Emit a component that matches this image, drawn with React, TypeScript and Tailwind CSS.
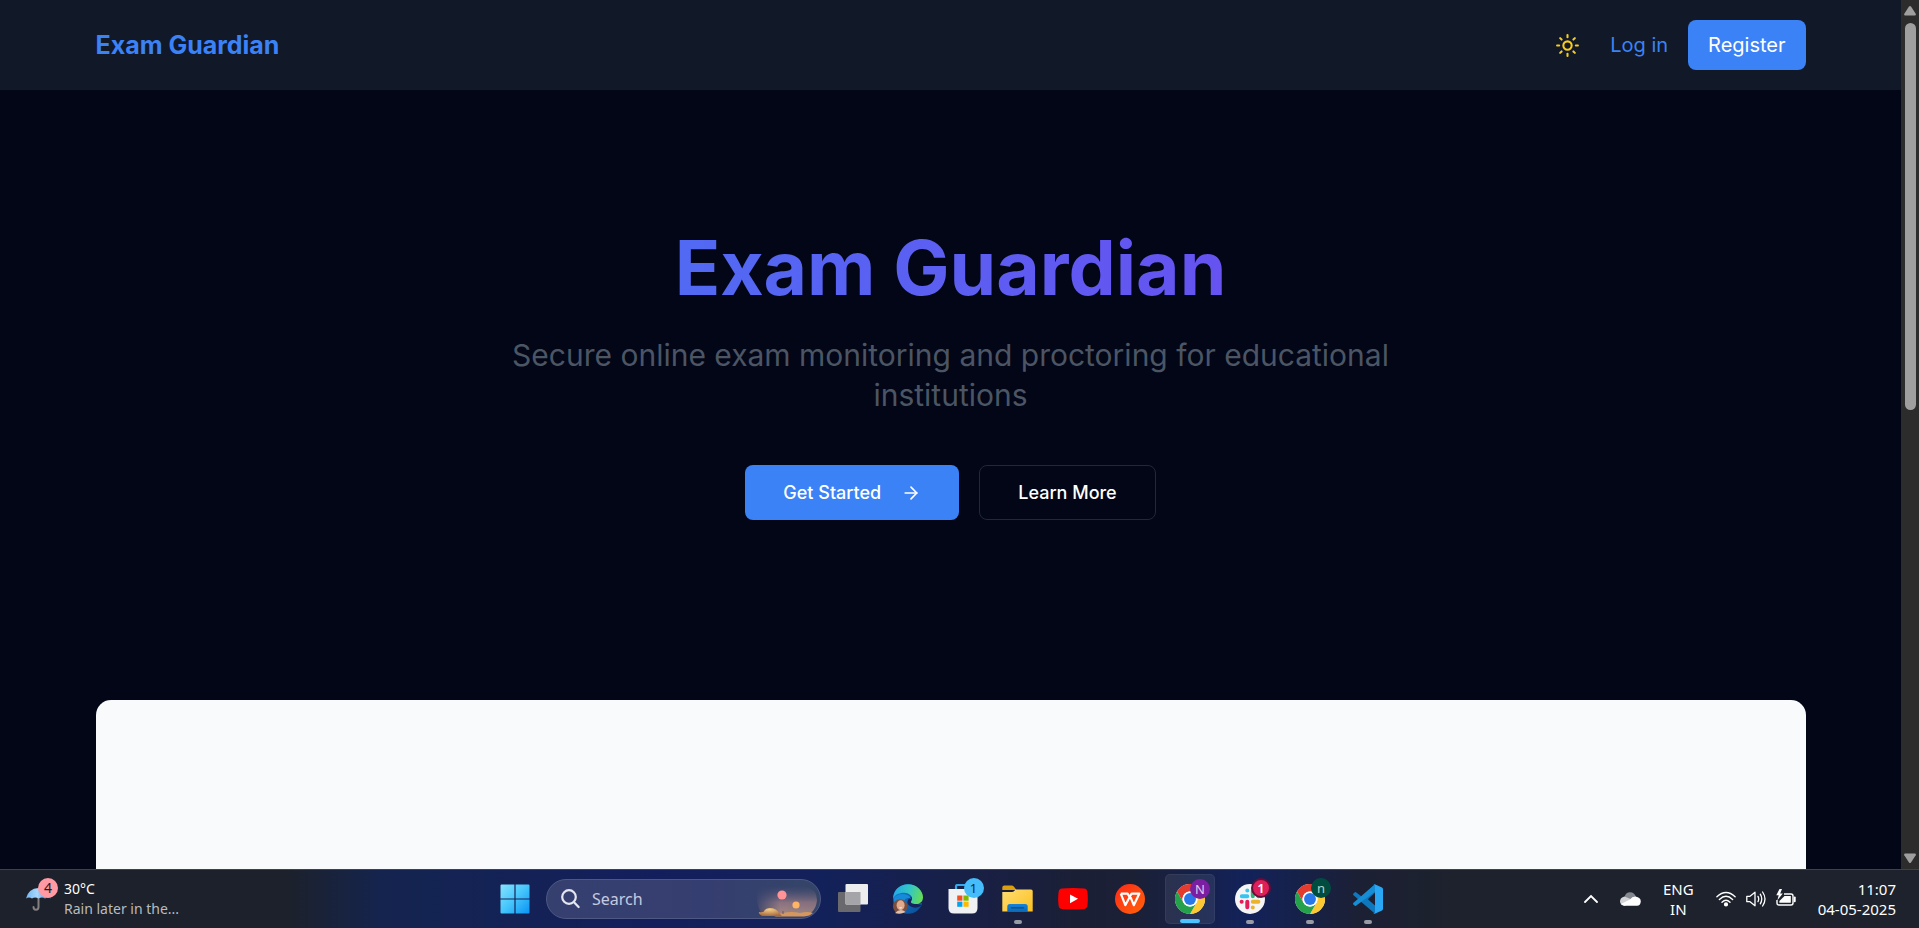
import type { ReactNode } from "react";
import { ArrowRight, Sun } from "lucide-react";

function Header() {
  return (
    <header className="bg-[#111827]">
      <div className="mx-auto flex h-[90px] w-[90%] max-w-[1710px] items-center justify-between">
        <a href="#home" className="text-[25px] leading-[35px] font-bold text-[#3b82f6]">
          Exam Guardian
        </a>
        <nav className="flex items-center gap-5 text-[20px] leading-[30px]">
          <button type="button" aria-label="Toggle theme" className="p-[10px] text-[#facc15]">
            <Sun size={25} strokeWidth={2} />
          </button>
          <a href="#login" className="text-[#3b82f6]">
            Log in
          </a>
          <a href="#register" className="rounded-[8px] bg-[#3b82f6] px-5 py-[10px] text-white">
            Register
          </a>
        </nav>
      </div>
    </header>
  );
}

function Hero() {
  return (
    <section className="mx-auto flex w-[90%] max-w-[1710px] flex-col items-center pt-[140px] pb-[180px] text-center">
      <h1 className="mb-[30px] w-full bg-linear-to-r/srgb from-[#3b82f6] to-[#7c3aed] bg-clip-text text-[75px] leading-[75px] font-bold text-transparent">
        Exam Guardian
      </h1>
      <p className="mb-[50px] max-w-[960px] text-[30px] leading-[40px] text-[#4b5563]">
        Secure online exam monitoring and proctoring for educational institutions
      </p>
      <div className="flex gap-5 text-[18px] leading-[25px] font-medium text-white">
        <button type="button" className="flex h-[55px] items-center gap-5 rounded-[8px] bg-[#3b82f6] px-[38px]">
          Get Started
          <ArrowRight size={20} strokeWidth={2} />
        </button>
        <button type="button" className="h-[55px] rounded-[8px] border border-[#1e293b] px-[38px]">
          Learn More
        </button>
      </div>
    </section>
  );
}

function ScrollBar() {
  return (
    <div aria-hidden="true" className="flex w-[18px] shrink-0 flex-col items-center justify-between bg-[#2c2c2c] py-[5px]">
      <div className="flex h-1/2 flex-col items-center gap-[7px]">
        <svg width="14" height="11" viewBox="0 0 14 11" fill="#9f9f9f">
          <path d="M6 1.6Q7 .2 8 1.6L12.7 8.8Q13.4 10.5 12 10.5H2Q.6 10.5 1.3 8.8Z" />
        </svg>
        <div className="h-[90%] w-[11px] rounded-full bg-[#9f9f9f]" />
      </div>
      <svg width="14" height="11" viewBox="0 0 14 11" fill="#9f9f9f">
        <path d="M6 9.4Q7 10.8 8 9.4L12.7 2.2Q13.4 .5 12 .5H2Q.6 .5 1.3 2.2Z" />
      </svg>
    </div>
  );
}

function StartIcon() {
  return (
    <svg width="30" height="30" viewBox="0 0 30 30">
      <defs>
        <linearGradient id="start" x1="0" y1="0" x2="1" y2="1">
          <stop offset="0" stopColor="#86e4ff" />
          <stop offset=".5" stopColor="#45c5fb" />
          <stop offset="1" stopColor="#0a93f5" />
        </linearGradient>
      </defs>
      <path
        fill="url(#start)"
        d="M1.5.5H14.4V14.4H.5V1.5Q.5.5 1.5.5ZM15.6.5H28.5Q29.5.5 29.5 1.5V14.4H15.6ZM.5 15.6H14.4V29.5H1.5Q.5 29.5.5 28.5ZM15.6 15.6H29.5V28.5Q29.5 29.5 28.5 29.5H15.6Z"
      />
    </svg>
  );
}

function SearchArt() {
  return (
    <svg width="66" height="38" viewBox="0 0 66 38" className="shrink-0">
      <defs>
        <linearGradient id="dusk" x1="0" y1="0" x2="0" y2="1">
          <stop offset="0" stopColor="#595a76" stopOpacity="0" />
          <stop offset=".55" stopColor="#8b7281" />
          <stop offset="1" stopColor="#a88b83" />
        </linearGradient>
        <linearGradient id="duskFade" x1="0" y1="0" x2="1" y2="0">
          <stop offset="0" stopColor="#fff" stopOpacity="0" />
          <stop offset=".4" stopColor="#fff" />
          <stop offset="1" stopColor="#fff" stopOpacity=".9" />
        </linearGradient>
        <mask id="duskMask">
          <rect width="66" height="38" fill="url(#duskFade)" />
        </mask>
        <radialGradient id="dune" cx=".45" cy=".2" r=".8">
          <stop offset="0" stopColor="#f4cd85" />
          <stop offset="1" stopColor="#a9693c" />
        </radialGradient>
      </defs>
      <path mask="url(#duskMask)" fill="url(#dusk)" d="M2 6H52Q63 10 63 20Q62 33 50 36H10Q2 30 2 6Z" />
      <circle cx="28" cy="15" r="4.6" fill="#ff9396" />
      <circle cx="42" cy="25" r="3.6" fill="#ffb564" />
      <path d="M20 36Q34 30 46 33Q54 31 59 33Q56 36 50 36.5H22Z" fill="#d5975d" />
      <path d="M8 36Q4 34 5 32Q9 33 10 31Q12 28 16 28Q22 28 25 33L28 36Z" fill="url(#dune)" />
      <path d="M9 27V32M29 31V34" stroke="#70505b" strokeWidth="1" />
    </svg>
  );
}

function TaskViewIcon() {
  return (
    <svg width="30" height="30" viewBox="0 0 30 30">
      <rect x="0" y="8" width="22.5" height="20" rx="1" fill="#6a6a6e" />
      <rect x="7.5" y="0" width="22.5" height="20.5" rx="1" fill="#ededee" />
      <path d="M7.5 8H22.5V20.5H8.5Q7.5 20.5 7.5 19.5Z" fill="#a5a5a9" />
    </svg>
  );
}

function EdgeIcon() {
  return (
    <svg width="30" height="30" viewBox="0 0 30 30">
      <defs>
        <linearGradient id="edgeTop" x1="0" y1=".3" x2="1" y2=".5">
          <stop offset="0" stopColor="#22a8e8" />
          <stop offset=".55" stopColor="#35c8c1" />
          <stop offset="1" stopColor="#66dd55" />
        </linearGradient>
        <linearGradient id="edgeBack" x1="0" y1="0" x2="1" y2="1">
          <stop offset="0" stopColor="#1185d8" />
          <stop offset="1" stopColor="#0c4a91" />
        </linearGradient>
      </defs>
      <circle cx="15" cy="15" r="14.8" fill="url(#edgeBack)" />
      <path d="M17 13Q11 20 19 23Q24 25 29 21Q25 20 21 19.5L30 19V14L21 12Z" fill="#15245b" />
      <path d="M.2 13C1 5 7.5.2 15 .2 23.5.2 30 6.5 30 13.2 30 17.8 26.8 20 23 20 19.5 20 17 18.8 18.3 17 20.8 13.5 17 8.8 11 8.8 5.5 8.8 1.4 11 .2 15Z" fill="url(#edgeTop)" />
      <path d="M1 14Q5 9 12 10.2Q17 11.3 18 15Q13 12 10.5 18Q4 15 .8 20Z" fill="#168bda" />
      <circle cx="7.2" cy="22.4" r="7.2" fill="#7b4f3d" />
      <ellipse cx="7.6" cy="21.3" rx="4" ry="5" fill="#dfaa8d" />
      <path d="M2 29Q7.5 23.5 12.5 28Q7 31 2 29Z" fill="#e3c0ae" />
      <path d="M5.8 23.5Q7.6 25.5 9.4 23.5Z" fill="#fff" />
    </svg>
  );
}

function StoreIcon() {
  return (
    <svg width="30" height="30" viewBox="0 0 30 30">
      <path d="M8 6V2.5Q8 1 9.5 1H20.5Q22 1 22 2.5V6" fill="none" stroke="#35a9e8" strokeWidth="2.2" />
      <path d="M.5 5H29.5V24Q29.5 29.5 24 29.5H6Q.5 29.5.5 24Z" fill="#f0f1f3" />
      <path d="M9.2 11.5H14.4V16.7H9.2Z" fill="#f25022" />
      <path d="M15.4 11.5H20.6V16.7H15.4Z" fill="#7fba00" />
      <path d="M9.2 17.6H14.4V22.8H9.2Z" fill="#00a4ef" />
      <path d="M15.4 17.6H20.6V22.8H15.4Z" fill="#ffb900" />
    </svg>
  );
}

function FolderIcon() {
  return (
    <svg width="31" height="30" viewBox="0 0 31 30">
      <defs>
        <linearGradient id="folder" x1="0" y1="0" x2="1" y2="1">
          <stop offset="0" stopColor="#ffdd72" />
          <stop offset="1" stopColor="#fcc01f" />
        </linearGradient>
        <linearGradient id="folderBase" x1="0" y1="0" x2="0" y2="1">
          <stop offset="0" stopColor="#1683d8" />
          <stop offset="1" stopColor="#0b68b7" />
        </linearGradient>
      </defs>
      <path d="M.3 3.5Q.3 1.5 2.3 1.5H9.5Q11 1.5 12 2.8L14.5 6H.3Z" fill="#dd9f0c" />
      <path d="M.3 8H10Q11.3 8 12.4 6.8L13.6 5.4H29Q30.7 5.4 30.7 7V27.5H.3Z" fill="url(#folder)" />
      <path d="M5.3 28V22.5Q5.3 20 7.8 20H23.2Q25.7 20 25.7 22.5V28Z" fill="url(#folderBase)" />
      <path d="M9.5 23.8H21.5" stroke="#064b88" strokeWidth="1.3" strokeLinecap="round" />
    </svg>
  );
}

function YouTubeIcon() {
  return (
    <svg width="30" height="30" viewBox="0 0 30 30">
      <path d="M4 4.6Q15 3.6 26 4.6Q29 5 29.4 8Q30.3 15 29.4 21.5Q29 24.6 26 25Q15 26 4 25Q1 24.6.6 21.5Q-.3 15 .6 8Q1 5 4 4.6Z" fill="#f00" />
      <path d="M12 10.4 20 14.8 12 19.2Z" fill="#fff" />
    </svg>
  );
}

function WpsIcon() {
  return (
    <svg width="30" height="30" viewBox="0 0 30 30">
      <defs>
        <linearGradient id="wps" x1="0" y1="0" x2="1" y2="1">
          <stop offset="0" stopColor="#ff2818" />
          <stop offset="1" stopColor="#ff6508" />
        </linearGradient>
      </defs>
      <circle cx="15" cy="15" r="15" fill="url(#wps)" />
      <path
        d="M5.8 9.6H12.6L15.4 14.8M5.8 9.6 10.3 21.2 16.6 9.6H24.4L18.8 21.2 15.6 13.4"
        fill="none"
        stroke="#fff"
        strokeWidth="2.2"
        strokeLinejoin="round"
      />
    </svg>
  );
}

function ChromeIcon() {
  return (
    <svg width="30" height="30" viewBox="0 0 48 48">
      <circle cx="24" cy="24" r="24" fill="#fff" />
      <path d="M3.2 12A24 24 0 0 1 44.8 12H24A12 12 0 0 0 13.6 30Z" fill="#e33b2e" />
      <path d="M44.8 12A24 24 0 0 1 24 48L34.4 30A12 12 0 0 0 24 12Z" fill="#fcc934" />
      <path d="M24 48A24 24 0 0 1 3.2 12L13.6 30A12 12 0 0 0 34.4 30Z" fill="#25a04b" />
      <circle cx="24" cy="24" r="12" fill="#fff" />
      <circle cx="24" cy="24" r="9.5" fill="#2878ea" />
    </svg>
  );
}

function SlackIcon() {
  return (
    <svg width="30" height="30" viewBox="0 0 30 30">
      <circle cx="15" cy="15" r="15" fill="#f5f5f5" />
      <g strokeWidth="4" strokeLinecap="round">
        <path d="M6.8 12.3H12.3M12.3 6.5V6.6" stroke="#36c5f0" />
        <path d="M17.8 6.8V12.3M23.4 12.3H23.5" stroke="#2eb67d" />
        <path d="M17.8 17.7H23.4M17.8 23.4V23.5" stroke="#ecb22e" />
        <path d="M12.3 17.7V23.3M6.6 17.7H6.7" stroke="#e01e5a" />
      </g>
    </svg>
  );
}

function CodeIcon() {
  return (
    <svg width="30" height="30" viewBox="0 0 30 30">
      <path d="M22 .3 8.6 12.6 3 8.3Q2.2 7.8 1.5 8.4L.4 9.5Q-.3 10.4.5 11.2L22 29.7V21.6L14.8 15.2 22 8.5Z" fill="#0d78bd" />
      <path d="M.5 18.8Q-.3 19.6.4 20.5L1.5 21.6Q2.2 22.2 3 21.7L22 7.8V.3Z" fill="#168dd4" />
      <path d="M21.8.2 29 3.6Q30 4.1 30 5.2V24.8Q30 25.9 29 26.4L21.8 29.8Q20.5 30 19.8 29.2 22 30 22 28V2Q22 0 19.8.8 20.5 0 21.8.2Z" fill="#2aa7f4" />
    </svg>
  );
}

function WeatherIcon() {
  return (
    <svg width="26" height="26" viewBox="0 0 26 26">
      <defs>
        <linearGradient id="canopy" x1="0" y1="0" x2="1" y2="0">
          <stop offset="0" stopColor="#6fb7f6" />
          <stop offset=".45" stopColor="#a9d8fb" />
          <stop offset="1" stopColor="#2687df" />
        </linearGradient>
      </defs>
      <path d="M12.5 12V21Q12.5 23.7 10 23.7Q7.5 23.7 7.5 21" fill="none" stroke="#858080" strokeWidth="2" strokeLinecap="round" />
      <path d="M0 12.5Q2.5 2.5 12.5 2Q22.5 2.5 25 12.5Q22 10.5 19 12.5Q16 10.5 12.5 12.5Q9 10.5 6 12.5Q3 10.5 0 12.5Z" fill="url(#canopy)" />
    </svg>
  );
}

type App = {
  name: string;
  icon: ReactNode;
  slot: string;
  badge?: string;
  badgeStyle?: string;
  running?: boolean;
  active?: boolean;
};

const apps: App[] = [
  { name: "Task view", icon: <TaskViewIcon />, slot: "w-[55px]" },
  { name: "Edge", icon: <EdgeIcon />, slot: "w-[55px]" },
  { name: "Microsoft Store", icon: <StoreIcon />, slot: "w-[55px]", badge: "1", badgeStyle: "bg-[#45bdfa] text-[#10243a]" },
  { name: "File Explorer", icon: <FolderIcon />, slot: "w-[55px]", running: true },
  { name: "YouTube", icon: <YouTubeIcon />, slot: "w-[55px]" },
  { name: "WPS Office", icon: <WpsIcon />, slot: "w-[60px]" },
  { name: "Chrome, profile N", icon: <ChromeIcon />, slot: "w-[60px]", badge: "N", badgeStyle: "bg-[#7b1fa2] text-[#e5c8ee]", active: true },
  { name: "Slack", icon: <SlackIcon />, slot: "w-[60px]", badge: "1", badgeStyle: "bg-[#e01e5a] text-white border-2 border-[#61103a] font-semibold", running: true },
  { name: "Chrome, profile n", icon: <ChromeIcon />, slot: "w-[60px]", badge: "n", badgeStyle: "bg-[#004d40] text-[#b7d4cf]", running: true },
  { name: "Visual Studio Code", icon: <CodeIcon />, slot: "w-[55px]", running: true },
];

function AppButton({ app }: { app: App }) {
  return (
    <div className={`${app.slot} flex justify-center`}>
      <button
        type="button"
        aria-label={app.name}
        className={`relative flex h-[50px] w-[50px] items-center justify-center rounded-[5px] ${
          app.active ? "border border-white/5 bg-white/8" : ""
        }`}
      >
        {app.icon}
        {app.badge && (
          <span
            className={`absolute top-1 right-1 flex h-5 w-5 items-center justify-center rounded-full text-[13px] leading-[16px] ${app.badgeStyle}`}
          >
            {app.badge}
          </span>
        )}
        {app.running && <span className="absolute bottom-0 h-1 w-2 rounded-full bg-[#989ba6]" />}
        {app.active && <span className="absolute bottom-0 h-1 w-5 rounded-full bg-[#4cc2ff]" />}
      </button>
    </div>
  );
}

function TrayIcons() {
  return (
    <button type="button" aria-label="Network, volume and battery" className="flex items-center gap-[10px]">
      <svg width="20" height="20" viewBox="0 0 20 20" fill="none" stroke="#fff" strokeWidth="1.4" strokeLinecap="round">
        <path d="M.9 7.8Q10-.7 19.1 7.8M3.4 10.5Q10 4.2 16.6 10.5M6 13.2Q10 9.3 14 13.2" />
        <circle cx="10" cy="15.4" r="1.4" fill="#fff" />
      </svg>
      <svg width="20" height="20" viewBox="0 0 20 20" fill="none" stroke="#fff" strokeWidth="1.3" strokeLinecap="round" strokeLinejoin="round">
        <path d="M.8 7.3H4L9 3.2V16.8L4 12.7H.8ZM12 7.4Q13.4 10 12 12.6M14.3 5.2Q17.2 10 14.3 14.8M16.6 3Q21.4 10 16.6 17" />
      </svg>
      <svg width="20" height="20" viewBox="0 0 20 20" fill="none" stroke="#fff" strokeWidth="1.4" strokeLinejoin="round">
        <path d="M8 5H15Q17 5 17 7V14Q17 16 15 16H3Q1 16 1 14V11" />
        <path d="M18.7 8.6V12.2" strokeWidth="2" strokeLinecap="round" />
        <path d="M8.5 7H14.8V13.8H3.4V12Z" fill="#fff" stroke="none" />
        <path d="M3.5 0 .3 6.2H2.7L1.4 11.2 6.8 4.6H4.2L6 0Z" fill="#fff" stroke="none" />
      </svg>
    </button>
  );
}

function Taskbar() {
  return (
    <footer className="grid h-[59px] shrink-0 grid-cols-[1fr_auto_1fr] items-center border-t border-[#3d434c] bg-[linear-gradient(90deg,#1c212b_0%,#1c212b_15%,#14244f_20%,#131f5c_34%,#13215a_43%,#1b1f36_56%,#1b2035_59%,#12225a_65%,#1c2034_71%,#1d222c_76%,#1d222c_100%)] font-['Noto_Sans',sans-serif] text-[14px] leading-5 text-white">
      <button type="button" className="flex items-center gap-3 pl-[26px] text-left">
        <span className="relative">
          <WeatherIcon />
          <span className="absolute -top-2 left-3 flex h-5 w-5 items-center justify-center rounded-full bg-[#ff99a4] text-[#241d22]">
            4
          </span>
        </span>
        <span>
          <span className="block">30°C</span>
          <span className="block text-[#b9bbbf]">Rain later in the...</span>
        </span>
      </button>

      <div className="mr-6 flex items-center">
        <button type="button" aria-label="Start">
          <StartIcon />
        </button>
        <div className="mr-1 ml-4 flex h-10 w-[275px] items-center rounded-full border border-[#4e5883] bg-[linear-gradient(90deg,#36406f,#353e70_60%,#344568)] pl-[14px]">
          <label htmlFor="taskbar-search" aria-label="Search">
            <svg width="19" height="20" viewBox="0 0 19 20" fill="none" stroke="#e4e7f0" strokeWidth="2.2" strokeLinecap="round">
              <circle cx="8" cy="8" r="6.8" />
              <path d="M13 13.2 17.6 18" />
            </svg>
          </label>
          <input
            id="taskbar-search"
            type="text"
            aria-label="Search"
            placeholder="Search"
            className="ml-3 min-w-0 flex-1 bg-transparent text-[16px] leading-6 outline-none placeholder:text-[#c5cae0]"
          />
          <SearchArt />
        </div>
        {apps.map((app) => (
          <AppButton key={app.name} app={app} />
        ))}
      </div>

      <div className="flex items-center justify-end gap-[22px] pr-[23px] text-[15px]">
        <button type="button" aria-label="Show hidden icons">
          <svg width="14" height="10" viewBox="0 0 14 10" fill="none" stroke="#fff" strokeWidth="1.8" strokeLinecap="round">
            <path d="M1 8 7 2 13 8" />
          </svg>
        </button>
        <button type="button" aria-label="OneDrive">
          <svg width="21" height="14" viewBox="0 0 21 14">
            <path d="M4.5 5Q5.5.5 10 .3Q14.5.3 16 5L10 9Z" fill="#85888e" />
            <path d="M0 9.5Q0 5.5 4.5 4.5L13 8 5 13.7Q0 13 0 9.5Z" fill="#d2d3d5" />
            <path d="M10 7.5Q12 4.5 15.5 4.6Q20.8 5.5 20.8 9.5Q20.5 13.7 17 13.7H4Q1.7 13.4 .8 12Z" fill="#fff" />
          </svg>
        </button>
        <button type="button" aria-label="Input language" className="text-center">
          <span className="block">ENG</span>
          <span className="block">IN</span>
        </button>
        <TrayIcons />
        <time dateTime="2025-05-04T11:07" className="text-right">
          <span className="block">11:07</span>
          <span className="block">04-05-2025</span>
        </time>
      </div>
    </footer>
  );
}

export default function App() {
  return (
    <div className="flex h-screen flex-col bg-[#020617] font-['Inter',sans-serif]">
      <div className="flex min-h-0 flex-1">
        <div className="flex min-w-0 flex-1 flex-col overflow-hidden">
          <Header />
          <main className="flex flex-1 flex-col">
            <Hero />
            <section aria-label="Features" className="mx-auto w-[90%] max-w-[1710px] flex-1 rounded-t-[15px] bg-[#f9fafc]" />
          </main>
        </div>
        <ScrollBar />
      </div>
      <Taskbar />
    </div>
  );
}
